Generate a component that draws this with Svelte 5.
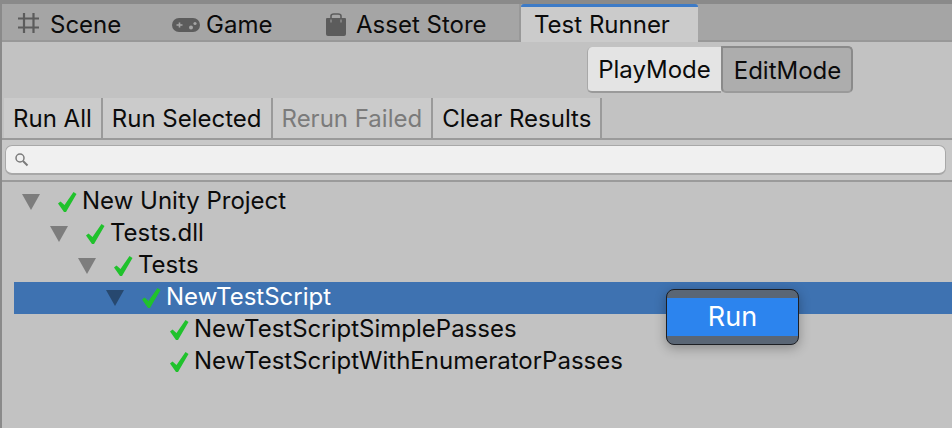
<script>
  const tabs = [
    { label: 'Scene', icon: 'scene' },
    { label: 'Game', icon: 'game' },
    { label: 'Asset Store', icon: 'store' },
  ];
  const actions = [
    { label: 'Run All' },
    { label: 'Run Selected' },
    { label: 'Rerun Failed', disabled: true },
    { label: 'Clear Results' },
  ];
  const rows = [
    { label: 'New Unity Project', depth: 0, arrow: true },
    { label: 'Tests.dll', depth: 1, arrow: true },
    { label: 'Tests', depth: 2, arrow: true },
    { label: 'NewTestScript', depth: 3, arrow: true, selected: true },
    { label: 'NewTestScriptSimplePasses', depth: 4 },
    { label: 'NewTestScriptWithEnumeratorPasses', depth: 4 },
  ];
</script>

<div class="window">
  <div class="tabbar">
    {#each tabs as tab}
      <div class="tab {tab.icon}">
        {#if tab.icon === 'scene'}
          <svg width="21" height="20" viewBox="0 0 21 20" fill="none" stroke="#5c5c5c" stroke-width="2.200">
            <path d="M6 0v20M15.500 0v20M0 5.500h21M0 14.500h21"/>
          </svg>
        {:else if tab.icon === 'game'}
          <svg width="28" height="14" viewBox="0 0 28 14">
            <rect width="28" height="14" rx="7" fill="#5c5c5c"/>
            <path d="M4.500 7h6M7.500 4.500v5" stroke="#a5a5a5" stroke-width="1.600"/>
            <circle cx="19" cy="9.500" r="2" fill="#a5a5a5"/>
            <circle cx="23" cy="5.500" r="1.600" fill="#a5a5a5"/>
          </svg>
        {:else}
          <svg width="20" height="23" viewBox="0 0 20 23" fill="none">
            <path d="M5 8V3Q5 1 8 1h4q3 0 3 2V8" stroke="#5c5c5c" stroke-width="1.600"/>
            <path d="M1 5h18q1 0 1 1V21q0 2-2 2H2q-2 0-2-2V6q0-1 1-1z" fill="#5c5c5c"/>
            <path d="M5 6.500v3M15 6.500v3" stroke="#a5a5a5" stroke-width="1"/>
          </svg>
        {/if}
        <span>{tab.label}</span>
      </div>
    {/each}
    <div class="tab active"><span>Test Runner</span></div>
  </div>

  <div class="modes">
    <div class="mode play">PlayMode</div>
    <div class="mode edit">EditMode</div>
  </div>

  <div class="actions">
    {#each actions as action}
      <div class="action" class:disabled={action.disabled}>{action.label}</div>
    {/each}
  </div>

  <div class="searchbar">
    <div class="search">
      <svg width="15" height="15" viewBox="0 0 15 15" fill="none" stroke="#7a7a7a">
        <circle cx="6" cy="6" r="4" stroke-width="1.500"/>
        <path d="M9 9l4.500 4.500" stroke-width="2"/>
      </svg>
    </div>
  </div>

  <div class="tree">
    {#each rows as row}
      <div class="row depth{row.depth}" class:selected={row.selected}>
        {#if row.arrow}
          <svg class="arrow" width="18" height="16" viewBox="0 0 18 16">
            <path d="M0 0h18L9 16z"/>
          </svg>
        {/if}
        <svg class="check" width="19" height="20" viewBox="0 0 19 20">
          <path d="M0 11.500L2.500 9.500L6.500 13L15.500 0L18.500 2L8 20H6z" fill="#20c22c"/>
        </svg>
        <span>{row.label}</span>
      </div>
    {/each}
  </div>

  <div class="menu">
    <div class="menu-item">Run</div>
  </div>
</div>

<style>
  :global(body) {
    margin: 0;
    background: #c2c2c2;
  }

  .window {
    position: relative;
    width: 952px;
    height: 428px;
    box-sizing: border-box;
    overflow: hidden;
    background: #c2c2c2;
    border-top: 4px solid #8a8a8a;
    border-left: 2px solid #8a8a8a;
    font-family: Inter, "Liberation Sans", sans-serif;
    font-size: 24px;
    color: #0b0b0b;
  }

  .tabbar {
    display: flex;
    height: 38px;
    box-sizing: border-box;
    background: #a5a5a5;
    border-bottom: 2px solid #989898;
  }

  .tab {
    display: flex;
    align-items: center;
    box-sizing: border-box;
    height: 36px;
    padding-top: 4px;
  }

  .tab.scene {
    width: 155px;
    padding-left: 16px;
    gap: 11px;
  }

  .tab.scene svg {
    margin-top: -2px;
  }

  .tab.game {
    width: 150px;
    padding-left: 15px;
    gap: 6px;
  }

  .tab.game svg {
    margin-top: 2px;
  }

  .tab.store {
    width: 214px;
    padding-left: 19px;
    gap: 10px;
    border-right: 2px solid #989898;
  }

  .tab.active {
    width: 177px;
    height: 38px;
    padding: 0 0 0 13px;
    background: #cbcbcb;
    border-top: 3px solid #3d7bc7;
    border-radius: 3px 3px 0 0;
  }

  .modes {
    display: flex;
    height: 55px;
    padding: 4px 0 0 585px;
    box-sizing: border-box;
  }

  .mode {
    display: flex;
    align-items: center;
    justify-content: center;
    box-sizing: border-box;
    height: 47px;
    padding-top: 2px;
  }

  .mode.play {
    width: 134px;
    height: 46px;
    margin-top: 1px;
    padding-top: 1px;
    background: #e4e4e4;
    border-bottom: 2px solid #9a9a9a;
    border-left: 1px solid #a8a8a8;
    border-radius: 5px 0 0 5px;
  }

  .mode.edit {
    width: 132px;
    padding-left: 1px;
    background: #adadad;
    border: 2px solid #8a8a8a;
    border-bottom-color: #9a9a9a;
    border-radius: 0 5px 5px 5px;
  }

  .actions {
    display: flex;
    height: 43px;
    box-sizing: border-box;
    padding: 1px 0 0 2px;
    border-bottom: 2px solid #9a9a9a;
  }

  .action {
    display: flex;
    align-items: center;
    padding: 0 9px;
    background: #cbcbcb;
    border-right: 2px solid #9a9a9a;
  }

  .action.disabled {
    color: #7b7b7b;
  }

  .searchbar {
    height: 42px;
    box-sizing: border-box;
    padding: 5px 6px 0 3px;
    background: #c8c8c8;
    border-bottom: 2px solid #9a9a9a;
  }

  .search {
    display: flex;
    align-items: center;
    height: 30px;
    box-sizing: border-box;
    padding-left: 8px;
    background: #f0f0f0;
    border: 1px solid #a8a8a8;
    border-bottom-width: 2px;
    border-radius: 7px;
  }

  .tree {
    padding: 4px 0 0 12px;
  }

  .row {
    display: flex;
    align-items: center;
    height: 32px;
  }

  .row span {
    padding-bottom: 3px;
  }

  .depth0 { padding-left: 8px; }
  .depth1 { padding-left: 36px; }
  .depth2 { padding-left: 64px; }
  .depth3 { padding-left: 92px; }
  .depth4 { padding-left: 156px; }

  .arrow {
    margin-right: 18px;
    fill: #7d7d7d;
  }

  .check {
    margin-right: 5px;
    flex-shrink: 0;
  }

  .row.selected {
    background: #3e72b1;
    color: #fff;
  }

  .row.selected .arrow {
    fill: #27486f;
  }

  .menu {
    position: absolute;
    left: 664px;
    top: 285px;
    width: 133px;
    height: 56px;
    box-sizing: border-box;
    padding: 8px 0;
    background: #5a6675;
    border: 1px solid #1d1f24;
    border-radius: 8px;
    box-shadow: 0 3px 12px rgba(0, 0, 0, 0.3);
  }

  .menu-item {
    display: flex;
    align-items: center;
    justify-content: center;
    height: 38px;
    box-sizing: border-box;
    padding-bottom: 2px;
    background: #2c84ee;
    color: #fff;
    font-size: 27px;
  }
</style>
